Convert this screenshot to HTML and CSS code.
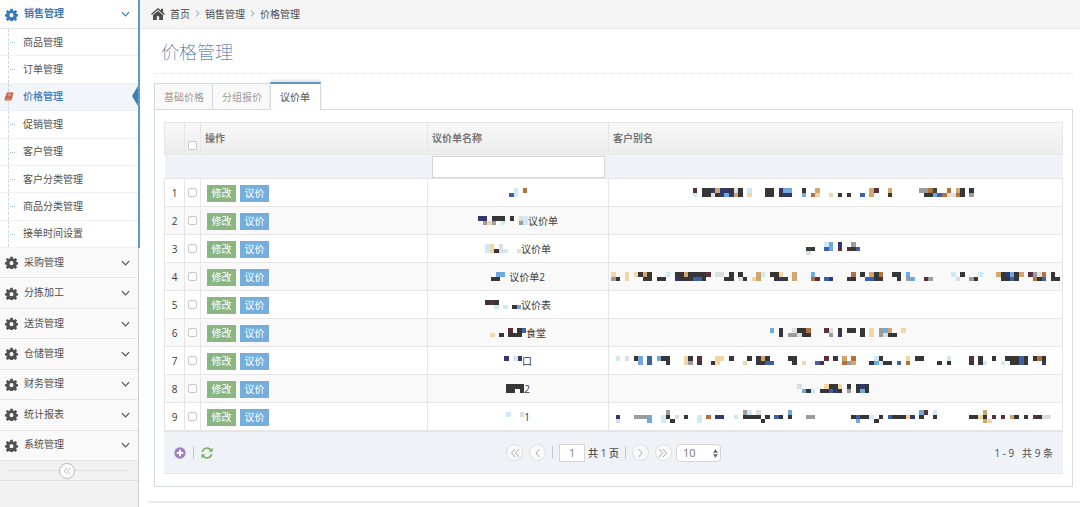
FILE: index.html
```html
<!DOCTYPE html>
<html lang="zh-CN">
<head>
<meta charset="utf-8">
<title>价格管理</title>
<link rel="stylesheet" href="styles.css">
</head>
<body>
<svg class="sprite" aria-hidden="true">
  <symbol id="cog" viewBox="0 0 16 16"><path fill="currentColor" fill-rule="evenodd" d="M6.600 1h2.800l.4 2 1.300.6 1.800-1.200 2 2-1.200 1.700.5 1.300 2 .4v2.600l-2 .4-.5 1.300 1.200 1.800-2 2-1.800-1.200-1.300.5-.4 2H6.600l-.4-2-1.300-.5-1.800 1.200-2-2 1.200-1.800-.5-1.300-2-.4V7.800l2-.4.5-1.300L1.100 4.400l2-2 1.800 1.200L6.200 3zM8 6.300a2.500 2.500 0 1 0 0 5 2.500 2.500 0 0 0 0-5z"/></symbol>
  <symbol id="down" viewBox="0 0 10 6"><path d="M1 1l4 4 4-4" fill="none" stroke="currentColor" stroke-width="1.300"/></symbol>
  <symbol id="one" viewBox="0 0 10 10"><path d="M6.500 1L3 5l3.500 4" fill="none" stroke="currentColor"/></symbol>
  <symbol id="two" viewBox="0 0 10 10"><path d="M5 1L1.500 5 5 9M9 1L5.500 5 9 9" fill="none" stroke="currentColor"/></symbol>
</svg>
<div class="app">
  <nav class="sidebar">
    <div class="open-group">
      <a class="item current" href="#"><svg class="cog"><use href="#cog"/></svg><span>销售管理</span><svg class="down"><use href="#down"/></svg></a>
      <ul class="sub">
        <li><a href="#">商品管理</a></li>
        <li><a href="#">订单管理</a></li>
        <li class="active"><a href="#">价格管理</a>
          <svg class="book" viewBox="0 0 10 9"><path fill="#c45a38" d="M3 .5h6.500L7.800 7.200 7 8.500H1.200L.4 7.400z"/><path d="M3.800 2.300h4M3.400 3.800h4M1.500 7h5.500" stroke="#fff" stroke-width=".5"/></svg>
          <svg class="pointer" viewBox="0 0 6 20"><path fill="#3d80b5" d="M6 0v20L3 15 0 10l3-5z"/></svg></li>
        <li><a href="#">促销管理</a></li>
        <li><a href="#">客户管理</a></li>
        <li><a href="#">客户分类管理</a></li>
        <li><a href="#">商品分类管理</a></li>
        <li><a href="#">接单时间设置</a></li>
      </ul>
    </div>
    <div class="groups">
      <a class="item" href="#"><svg class="cog"><use href="#cog"/></svg><span>采购管理</span><svg class="down"><use href="#down"/></svg></a>
      <a class="item" href="#"><svg class="cog"><use href="#cog"/></svg><span>分拣加工</span><svg class="down"><use href="#down"/></svg></a>
      <a class="item" href="#"><svg class="cog"><use href="#cog"/></svg><span>送货管理</span><svg class="down"><use href="#down"/></svg></a>
      <a class="item" href="#"><svg class="cog"><use href="#cog"/></svg><span>仓储管理</span><svg class="down"><use href="#down"/></svg></a>
      <a class="item" href="#"><svg class="cog"><use href="#cog"/></svg><span>财务管理</span><svg class="down"><use href="#down"/></svg></a>
      <a class="item" href="#"><svg class="cog"><use href="#cog"/></svg><span>统计报表</span><svg class="down"><use href="#down"/></svg></a>
      <a class="item" href="#"><svg class="cog"><use href="#cog"/></svg><span>系统管理</span><svg class="down"><use href="#down"/></svg></a>
    </div>
    <div class="collapse"><button class="round" type="button" aria-label="收起"><svg><use href="#two"/></svg></button></div>
  </nav>
  <main class="main">
    <div class="crumbs">
      <svg class="home" viewBox="0 0 14 12"><path fill="currentColor" d="M7 0L0 6l.9 1L7 1.800 13.100 7l.9-1-2-1.700V.8h-2v1.800zM7 2.900L2 7.100V12h3.800V8.300h2.400V12H12V7.100z"/></svg>
      <a href="#">首页</a><svg class="sep" viewBox="0 0 4 6"><path d="M.7.5L3.200 3 .7 5.500" fill="none" stroke="currentColor"/></svg>
      <a href="#">销售管理</a><svg class="sep" viewBox="0 0 4 6"><path d="M.7.5L3.200 3 .7 5.500" fill="none" stroke="currentColor"/></svg>
      <span>价格管理</span>
    </div>
    <div class="content">
      <h1>价格管理</h1>
      <div class="tabs" role="tablist">
        <button type="button" role="tab">基础价格</button><button type="button" role="tab">分组报价</button><button class="selected" type="button" role="tab">议价单</button>
      </div>
      <section class="panel">
        <table class="grid">
          <colgroup><col class="c-num"><col class="c-check"><col class="c-op"><col class="c-name"><col></colgroup>
          <thead>
            <tr class="head"><th></th><th class="check"><input type="checkbox" aria-label="全选"></th><th>操作</th><th>议价单名称</th><th>客户别名</th></tr>
            <tr class="filter"><td></td><td></td><td></td><td><input type="text" aria-label="议价单名称"></td><td></td></tr>
          </thead>
          <tbody id="rows"></tbody>
        </table>
        <div class="pager">
          <div class="tools">
            <button type="button" aria-label="添加"><svg viewBox="0 0 12 12"><circle cx="6" cy="6" r="5.700" fill="#a27dc0"/><path d="M6 2.800v6.400M2.800 6h6.400" stroke="#fff" stroke-width="1.900"/></svg></button>
            <i class="bar"></i>
            <button type="button" aria-label="刷新"><svg viewBox="0 0 12 12"><path d="M1.300 5A4.800 4.800 0 0 1 9.800 3M10.700 7a4.800 4.800 0 0 1-8.500 2" fill="none" stroke="#7cb566" stroke-width="1.700"/><path fill="#7cb566" d="M11.700.6v4.200H7.500zM.3 11.400V7.200h4.200z"/></svg></button>
          </div>
          <div class="pages">
            <button class="round" type="button" aria-label="首页"><svg><use href="#two"/></svg></button>
            <button class="round" type="button" aria-label="上一页"><svg><use href="#one"/></svg></button>
            <i class="bar"></i>
            <label><input type="text" value="1" aria-label="页码"> 共 1 页</label>
            <i class="bar"></i>
            <button class="round flip" type="button" aria-label="下一页"><svg><use href="#one"/></svg></button>
            <span class="end"><button class="round flip" type="button" aria-label="末页"><svg><use href="#two"/></svg></button>
            <span class="size"><select aria-label="每页条数"><option>10</option></select><svg viewBox="0 0 6 10"><path fill="#666" d="M3 0l3 4H0zM3 10L0 6h6z"/></svg></span></span>
          </div>
          <div class="total">1 - 9&nbsp;&nbsp; 共 9 条</div>
        </div>
      </section>
    </div>
    <footer></footer>
  </main>
</div>
<script src="rows.js"></script>
</body>
</html>
```
FILE: styles.css
```css
* { box-sizing: border-box; }
body {
  margin: 0;
  background: #fff;
  color: #393939;
  font: 10px/16px "Open Sans", "Noto Sans CJK SC", sans-serif;
}
a { color: inherit; text-decoration: none; }
button, input, select { font: inherit; color: inherit; margin: 0; }
button { cursor: pointer; }
svg { display: block; }
.sprite { position: absolute; width: 0; height: 0; }

.app { display: flex; min-height: 100vh; }

.sidebar {
  flex: 0 0 139px;
  background: #f2f2f2;
  border-right: 1px solid #ccc;
  color: #505050;
}
.open-group {
  background: #fff;
  border-right: 2px solid #5b9acb;
  margin-right: -2px;
  position: relative;
}
.item {
  display: flex;
  align-items: center;
  gap: 6px;
  padding: 0 8px 0 5px;
  background: #f9f9f9;
  border-bottom: 1px solid #e5e5e5;
}
.item span { flex: 1; padding-bottom: 2px; }
.item .cog { width: 13px; height: 13px; }
.item .down { width: 9px; height: 6px; }
.item.current {
  height: 29px;
  background: #fff;
  color: #3a7ab8;
  font-weight: 700;
}
.sub {
  list-style: none;
  margin: 0;
  padding: 0;
  display: grid;
  grid-auto-rows: 1fr;
  min-height: 219px;
}
.sub li {
  position: relative;
  display: flex;
  align-items: center;
  padding: 0 0 1px 23px;
  border-bottom: 1px solid #edf1f4;
}
.sub li::before {
  content: "";
  position: absolute;
  left: 8px;
  top: 0;
  bottom: 0;
  border-left: 1px dashed #ccd7e2;
}
.sub li::after {
  content: "";
  position: absolute;
  left: 10px;
  width: 5px;
  top: 13px;
  border-top: 1px dotted #9dbdd6;
}
.sub .active { background: #f2f5fa; color: #3a7ab8; font-weight: 500; }
.sub .active::after { display: none; }
.book { position: absolute; left: 4px; z-index: 1; width: 10px; height: 9px; }
.pointer { position: absolute; right: 0; width: 6px; height: 20px; }
.groups { display: grid; grid-auto-rows: 1fr; min-height: 213px; }
.collapse {
  display: flex;
  justify-content: center;
  height: 20px;
  align-items: center;
  padding-right: 5px;
  border-bottom: 1px solid #e0e0e0;
  background: linear-gradient(#e0e0e0, #e0e0e0) center / 88% 1px no-repeat;
}
.round {
  display: grid;
  place-items: center;
  width: 17px;
  height: 17px;
  padding: 0;
  border: 1px solid #ddd;
  border-radius: 50%;
  background: #fafafa;
  color: #aaa;
}
.round svg { width: 10px; height: 10px; }
.collapse .round { width: 16px; height: 16px; border-color: #bbb; background: #fff; }
.collapse .round svg { width: 8px; height: 8px; }
.flip svg { transform: rotate(180deg); }

.main { flex: 1; min-width: 0; }
.crumbs {
  display: flex;
  align-items: center;
  gap: 5px;
  height: 29px;
  padding: 0 0 1px 12px;
  background: #f5f5f5;
  border-bottom: 1px solid #e8e8e8;
  color: #4c4c4c;
}
.home { width: 14px; height: 12px; }
.sep { width: 5px; height: 7px; color: #b2b6bf; }
.content { padding: 8px 7px 0 15px; }
h1 {
  margin: 0 0 8px;
  padding: 0 7px 8px;
  border-bottom: 1px dotted #e2e2e2;
  color: #1f5c9c;
  font-size: 18px;
  line-height: 28px;
  font-family: "Noto Sans CJK SC", sans-serif;
  font-weight: 100;
}
.tabs { display: flex; align-items: flex-end; }
.tabs button {
  height: 26px;
  padding: 0 8px 0 9px;
  margin-right: -1px;
  border: 1px solid #d3dae2;
  border-bottom: 0;
  background: #f9f9f9;
  color: #999;
}
.tabs .selected {
  position: relative;
  height: 28px;
  padding: 0 10px 0 9px;
  margin-bottom: -1px;
  border-top: 2px solid #5c96ca;
  background: #fff;
  color: #4c4c4c;
  box-shadow: 0 -2px 3px rgba(0, 0, 0, .12);
  clip-path: inset(-4px -4px 0 -4px);
}
.panel { border: 1px solid #d5dbe1; padding: 12px 9px; }

.grid {
  width: 100%;
  table-layout: fixed;
  border-collapse: collapse;
}
.c-num { width: 20px; }
.c-check { width: 16px; }
.c-op { width: 227px; }
.c-name { width: 181px; }
.grid th, .grid td { padding: 0; border: 1px solid #e6e6e6; }
.grid .head { height: 32px; background: linear-gradient(#f8f8f8, #ececec); color: #777; }
.grid .head th { padding: 0 4px 2px; text-align: left; font-weight: 700; }
.grid .head .check { padding: 14px 0 0; }
.grid .filter { height: 24px; background: #eff3f8; }
.grid .filter td { border-width: 1px 0; }
.filter input {
  display: block;
  width: calc(100% - 8px);
  height: 22px;
  margin: 0 auto;
  border: 1px solid #d5d5d5;
  background: #fff;
}
.grid tbody tr { height: 28px; }
.grid tbody tr:nth-child(even) { background: #f9f9f9; }
.num { text-align: center; }
.check { text-align: center; }
.check input {
  appearance: none;
  display: block;
  width: 9px;
  height: 9px;
  margin: 0 auto;
  border: 1px solid #c8c8c8;
  border-radius: 2px;
  background: #fff;
}
.ops { display: flex; gap: 4px; padding: 2px 6px 0; }
.ops button {
  width: 29px;
  height: 17px;
  padding: 0;
  border: 0;
  color: #fff;
  line-height: 17px;
  background: #8cb681;
}
.ops .price { background: #75aedb; }
.name { display: flex; justify-content: center; align-items: center; }
.mosaic { height: auto; flex: none; }
.grid .alias { padding: 0 2px; }
.alias .mosaic { width: 100%; }

.pager {
  display: grid;
  grid-template-columns: 1fr auto 1fr;
  align-items: center;
  height: 43px;
  padding: 0 10px;
  background: #eff3f8;
  border-top: 1px solid #e1e4e8;
  border-bottom: 1px solid #e4e7ea;
  color: #4c4c4c;
}
.tools, .pages { display: flex; align-items: center; gap: 6px; }
.tools { gap: 7px; }
.tools button { padding: 0; border: 0; background: none; }
.tools svg { width: 12px; height: 12px; }
.bar { width: 1px; height: 13px; background: #c3ccd5; }
.pages label { display: flex; align-items: center; gap: 3px; font-weight: 500; }
.pages input {
  width: 26px;
  height: 18px;
  padding: 0;
  border: 1px solid #d5d5d5;
  background: #fff;
  color: #777;
  text-align: center;
}
.end { display: flex; align-items: center; gap: 4px; }
.size { position: relative; }
.size select {
  appearance: none;
  display: block;
  width: 45px;
  height: 18px;
  padding: 0 6px;
  border: 1px solid #d5d5d5;
  border-radius: 4px;
  background: #fff;
  color: #777;
  font-size: 11px;
}
.size svg { position: absolute; right: 3px; top: 5px; width: 5px; height: 9px; }
.total { text-align: right; }
footer { margin: 14px 0 0 9px; border-top: 2px solid #ebebeb; }
```
FILE: rows.js
```js
// Masked names are drawn as coloured blocks. Each token is a column index
// followed by the block colours from top to bottom ("." is empty).
const colors = {
  K: '#363636', N: '#33386a', M: '#56313a', B: '#3c60aa', b: '#70a9db', c: '#cfeaf7',
  O: '#b5703f', o: '#f3d5a6', t: '#d2a66c', g: '#9c9c9c', l: '#dedede', G: '#33493a'
};
const rows = [
  [4, '0.B 1cc 3O', '', '18Mc 20KK 21KK 22Nl 23tK 24NN 25Nb 26KN 27lt 28KK 30co 34KK 35KK 37NK 38bN 39bN 42Kb 44.O 45to 48.o 50.K 52.K 55.B 57tt 58M 61tK 68g 69gK 70OK 71Gb 72.B 73.O 74Ol 75.l 76tO 77KK 79Kg'],
  [11, '0N 1Ng 2.o 3Kg 4K 5Kc 7K 9lg 10cc', '议价单', ''],
  [8, '0cc 1oo 2.K 3ll 4.c 7.l', '议价单', '43.Gl 44.K 47cB 48bb 50NM 52.M 53gK 54.B'],
  [4, '0.K 1bK 2b', '议价单2', '0og 1.K 3oo 5o 6K 7tK 8KK 10.K 11.K 12c 14KN 15KK 16tK 17KK 18KB 19KB 20KK 21M 23l 24l 25.K 26KK 28Kl 29.K 31.o 32tt 33c 35K 36KK 37oN 38.K 40tt 44bO 45.M 47.B 48.N 52.K 53OK 55K 56.B 57tB 58KK 59OK 62K 63KK 65bg 66.b 69.M 70.g 75c 76.l 77K 79.g 80.K 81c 85t 86KK 87NK 88bB 89KK 90t 92M 93gO 94lK 95OB 97KK 98.K'],
  [8, '0K 1M 2Kc 4.c 6.K 7.b', '议价表', ''],
  [8, '0.o 2.K 4MK 5.K 6KK 7B', '食堂', '35b 37KK 39.g 40lg 41Kl 42KK 43OK 47M 48lg 50KN 52K 53K 55KK 57oo 59gg 60bl 61tK 62.K 64o'],
  [4, '0N 2c 3N', '口', '1c 3l 5K 6bb 8BB 10b 11K 12KK 16oo 17Kg 19MK 22.K 23oo 24o 26K 29.o 30K 32KK 33tK 34KB 35.B 39K 40KK 42.o 45.B 46.M 47M 49K 51tO 52.g 53Ot 57.K 58cb 59Kc 60.K 61.K 63.B 65oO 67K 68K 72.K 74cK 79MK 81KK 82.c 84K 86.c 87K 88KK 89KK 90BB 91KK 93K 94O 95KN'],
  [4, '0KK 1KK 2K 3KK', '2', '41l 42.b 43.K 44.c 46.K 47oK 48KB 49KN 50oK 52Kg 54KK 55Nb 56KK'],
  [4, '0c 3l', '1', '1.Nl 5.g 6.g 7.g 8.bb 11.cc 12gK 13..K 14.l 16.K 19.cc 21.O 23.N 24.N 27.c 29gK 30cK 31.K 32lK 33..K 34.K 36.B 37.K 39bK 43.g 44.g 53.K 54.Bb 55.K 56.K 57.c 58..K 59.K 61.B 62.K 63.K 64.K 65.o 66.N 68bK 69M 71cK 79.K 80.K 81.o 82tKt 83..o 84.M 86.M 88.t 89.K 91.K 93.M 94.K 95.l 96.l']
];

function mosaic(cols, data, width) {
  let height = 2;
  let rects = '';
  for (const token of data.split(' ').filter(Boolean)) {
    const [, x, column] = token.match(/^(\d+)(.+)$/);
    height = Math.max(height, column.length);
    [...column].forEach((c, y) => {
      if (c !== '.') rects += `<rect x="${x}" y="${y}" width="1" height="1" fill="${colors[c]}"/>`;
    });
  }
  const size = width ? ` width="${width}"` : '';
  return `<svg class="mosaic" viewBox="0 0 ${cols} ${height}"${size} shape-rendering="crispEdges">${rects}</svg>`;
}

document.getElementById('rows').innerHTML = rows.map(([cols, block, text, alias], i) => `
  <tr>
    <td class="num">${i + 1}</td>
    <td class="check"><input type="checkbox" aria-label="选择第${i + 1}行"></td>
    <td><div class="ops"><button type="button">修改</button><button class="price" type="button">议价</button></div></td>
    <td><div class="name">${mosaic(cols, block, Math.round(cols * 4.55))}<span>${text}</span></div></td>
    <td class="alias">${alias ? mosaic(99, alias) : ''}</td>
  </tr>`).join('');
```
